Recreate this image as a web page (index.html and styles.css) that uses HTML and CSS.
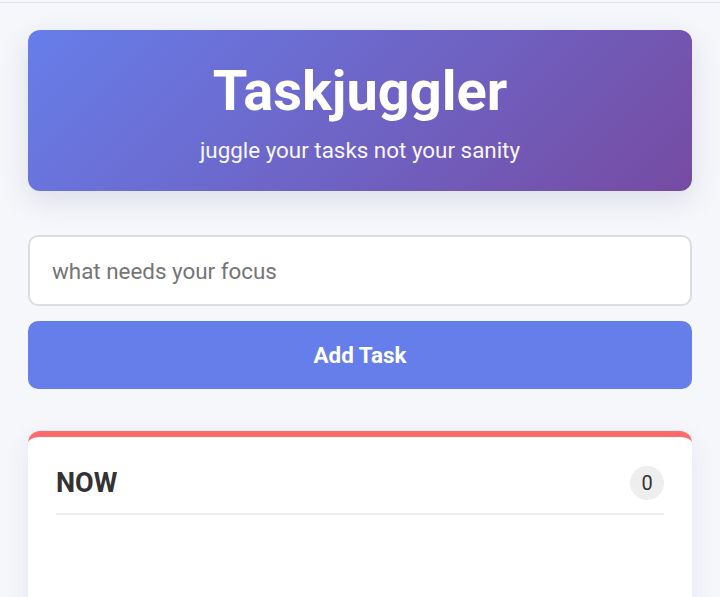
FILE: index.html
```html
<!DOCTYPE html>
<html lang="en">
<head>
<meta charset="utf-8">
<title>Taskjuggler</title>
<link rel="stylesheet" href="styles.css">
</head>
<body>
<div class="topline"></div>
<main class="app">
  <header class="hero">
    <h1 class="hero-title">Taskjuggler</h1>
    <p class="hero-sub">juggle your tasks not your sanity</p>
  </header>
  <form class="add-form">
    <input class="task-input" type="text" placeholder="what needs your focus">
    <button class="add-btn" type="button">Add Task</button>
  </form>
  <section class="column column-now">
    <div class="column-head">
      <h2 class="column-title">NOW</h2>
      <span class="count">0</span>
    </div>
    <div class="column-body"></div>
  </section>
</main>
</body>
</html>
```
FILE: styles.css
```css
* { box-sizing: border-box; }
html, body { margin: 0; padding: 0; }
body {
  background: #f6f7fb;
  font-family: Roboto, "Liberation Sans", sans-serif;
  color: #333;
  overflow: hidden;
  height: 597px;
}
.topline {
  margin-top: 2px;
  height: 1px;
  background: #dde2ed;
}
.app {
  padding: 27px 28px 0;
  height: 594px;
  overflow: hidden;
}
.hero {
  background: linear-gradient(135deg, #667eea 0%, #764ba2 100%);
  border-radius: 12px;
  padding: 28px 20px 28px;
  text-align: center;
  color: #fff;
  box-shadow: 0 10px 30px rgba(40, 50, 90, 0.12);
}
.hero-title {
  margin: 0 0 13px;
  font-size: 56px;
  font-weight: 700;
  line-height: 66px;
}
.hero-sub {
  margin: 0;
  font-size: 22.4px;
  line-height: 26px;
  opacity: 0.95;
}
.add-form {
  margin-top: 44px;
  display: flex;
  flex-direction: column;
  gap: 15px;
}
.task-input {
  display: block;
  width: 100%;
  height: 71px;
  padding: 0 22px;
  font-family: inherit;
  font-size: 22.4px;
  color: #333;
  background: #fff;
  border: 2px solid #dddddd;
  border-radius: 10px;
  outline: none;
}
.task-input::placeholder { color: #757575; }
.add-btn {
  display: block;
  width: 100%;
  height: 68px;
  border: 0;
  border-radius: 10px;
  background: #667eea;
  color: #fff;
  font-family: inherit;
  font-size: 22.4px;
  font-weight: 700;
}
.column {
  margin-top: 42px;
  background: #fff;
  border-top: 6px solid #ff6b6b;
  border-radius: 12px;
  padding: 29px 28px 28px;
  min-height: 300px;
  box-shadow: 0 6px 24px rgba(40, 50, 90, 0.08);
}
.column-head {
  display: flex;
  align-items: center;
  justify-content: space-between;
  padding-bottom: 13px;
  border-bottom: 2px solid #eeeeee;
}
.column-title {
  margin: 0;
  font-size: 27px;
  font-weight: 700;
  line-height: 34px;
  color: #333;
}
.count {
  width: 34px;
  height: 34px;
  border-radius: 50%;
  background: #eeeeee;
  display: flex;
  align-items: center;
  justify-content: center;
  font-size: 20px;
  color: #333;
}
```
